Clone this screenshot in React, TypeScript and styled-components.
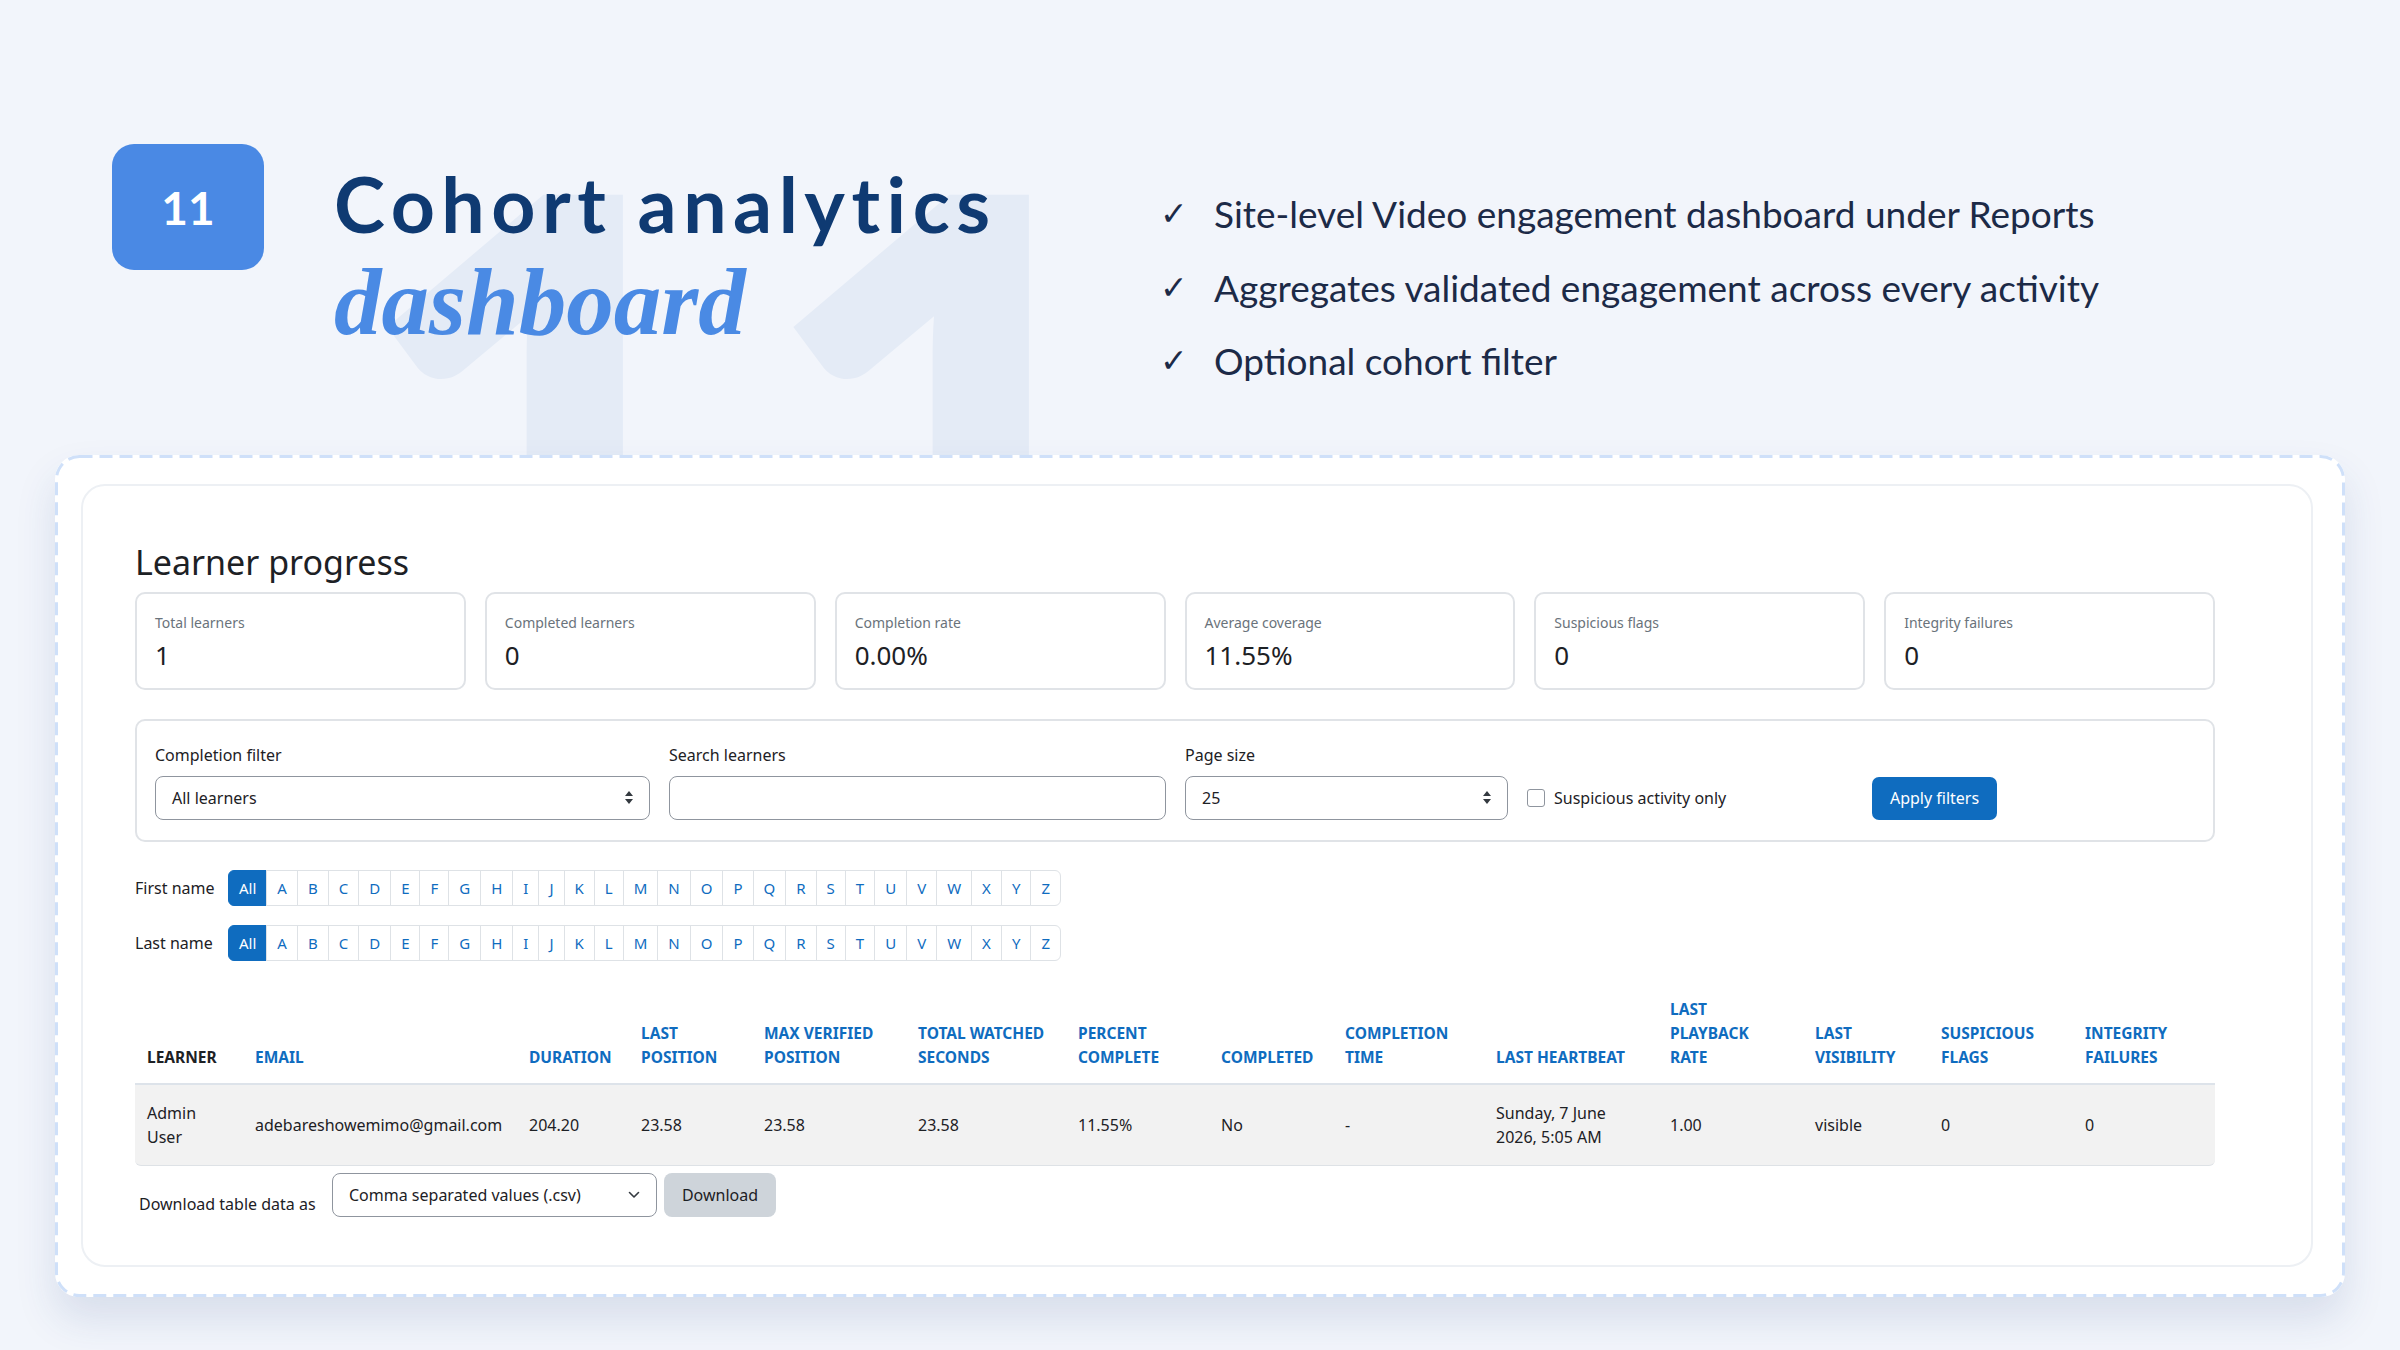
import React from "react";
import styled, { createGlobalStyle, css } from "styled-components";

const GlobalStyle = createGlobalStyle`
  html, body { margin: 0; padding: 0; background: #f2f5fb; }
  * { box-sizing: border-box; }
  body { font-family: "Noto Sans", "Open Sans", sans-serif; color: #1d2125; }
`;

const Page = styled.div`
  position: relative;
  width: 2400px;
  height: 1350px;
  overflow: hidden;
  background: #f2f5fb;
`;

const Watermark = styled.div`
  position: absolute;
  left: 346px;
  top: 82px;
  font-family: Lato, sans-serif;
  font-weight: 900;
  font-size: 700px;
  line-height: 1;
  color: #e4ebf6;
  pointer-events: none;
  user-select: none;
  z-index: 0;
`;

const Hero = styled.header`
  position: relative;
  z-index: 1;
  display: flex;
  align-items: flex-start;
  height: 455px;
  padding: 144px 0 0 112px;
`;

const Badge = styled.div`
  flex: none;
  width: 152px;
  height: 126px;
  border-radius: 22px;
  background: #4a89e4;
  color: #fff;
  display: flex;
  align-items: center;
  justify-content: center;
  font-family: Lato, sans-serif;
  font-weight: 700;
  font-size: 46px;
`;

const TitleBlock = styled.div`
  flex: none;
  width: 826px;
  margin: 21px 0 0 70px;
`;

const TitleMain = styled.h1`
  margin: 0;
  font-family: Lato, sans-serif;
  font-weight: 700;
  font-size: 77px;
  line-height: 1;
  letter-spacing: 6.5px;
  color: #0f3a72;
  white-space: nowrap;
`;

const TitleAccent = styled.div`
  margin-top: 13px;
  font-family: "Liberation Serif", serif;
  font-style: italic;
  font-weight: 700;
  font-size: 95px;
  line-height: 1;
  color: #4a8ae4;
`;

const Bullets = styled.ul`
  list-style: none;
  margin: 33px 0 0;
  padding: 0;
`;

const Bullet = styled.li`
  display: flex;
  align-items: center;
  height: 73.5px;
  font-family: Lato, sans-serif;
  font-size: 37px;
  color: #1c2a47;
  white-space: nowrap;
`;

const Check = styled.span`
  width: 54px;
  flex: none;
  font-family: "DejaVu Sans", sans-serif;
  font-size: 33px;
  color: #1c2a47;
`;

const Frame = styled.section`
  position: relative;
  z-index: 1;
  display: flex;
  margin-left: 55px;
  width: 2290px;
  height: 842px;
  border: 3px solid transparent;
  border-radius: 24px;
  background: #fff;
  box-shadow: 0 22px 40px rgba(38, 72, 130, 0.13);
  padding: 26px 29px 27px 23px;
`;

const DashedOutline = styled.svg`
  position: absolute;
  top: -3px;
  left: -3px;
  width: 2290px;
  height: 842px;
  pointer-events: none;
  overflow: visible;
`;

const Panel = styled.div`
  flex: 1;
  border: 2px solid #edf0f4;
  border-radius: 24px;
  padding: 56px 96px 0 52px;
`;

const Heading = styled.h2`
  margin: 0 0 9px;
  font-size: 34px;
  font-weight: 400;
  line-height: 40.8px;
  color: #1d2125;
`;

const Stats = styled.div`
  display: grid;
  grid-template-columns: repeat(6, 1fr);
  gap: 19px;
`;

const StatCard = styled.div`
  height: 98px;
  border: 2px solid #e0e3e7;
  border-radius: 10px;
  padding: 19px 18px 0;
`;

const StatLabel = styled.div`
  font-size: 14px;
  line-height: 20px;
  color: #6a737b;
`;

const StatValue = styled.div`
  margin-top: 6px;
  font-size: 26px;
  line-height: 32px;
  color: #1d2125;
`;

const FilterBox = styled.form`
  margin-top: 29px;
  height: 123px;
  border: 2px solid #e0e3e7;
  border-radius: 10px;
  padding: 23px 18px 20px;
  display: flex;
  align-items: flex-end;
  gap: 19px;
`;

const Field = styled.div<{ $w: number }>`
  width: ${(p) => p.$w}px;
  flex: none;
  display: flex;
  flex-direction: column;
`;

const FieldLabel = styled.label`
  font-size: 16px;
  line-height: 22px;
  margin-bottom: 10px;
  color: #1d2125;
`;

const controlBase = css`
  height: 44px;
  border: 1px solid #8f959e;
  border-radius: 8px;
  background: #fff;
  font-family: inherit;
  font-size: 16px;
  color: #1d2125;
`;

const SelectBox = styled.div`
  ${controlBase};
  display: flex;
  align-items: center;
  justify-content: space-between;
  padding: 0 16px;
`;

const TextInput = styled.input`
  ${controlBase};
  width: 100%;
  padding: 0 16px;
  outline: none;
`;

const CheckGroup = styled.label`
  flex: none;
  width: 326px;
  height: 44px;
  display: flex;
  align-items: center;
  gap: 9px;
  font-size: 16px;
  color: #1d2125;
`;

const CheckBox = styled.span`
  width: 18px;
  height: 18px;
  border: 1px solid #8f959e;
  border-radius: 3px;
  background: #fff;
`;

const PrimaryButton = styled.button`
  flex: none;
  width: 125px;
  height: 43px;
  border: none;
  border-radius: 7px;
  background: #0f6cbf;
  color: #fff;
  font-family: inherit;
  font-size: 16px;
`;

const InitialsRow = styled.div<{ $first?: boolean }>`
  display: flex;
  align-items: center;
  margin-top: ${(p) => (p.$first ? 28 : 19)}px;
`;

const InitialsLabel = styled.span`
  width: 93px;
  flex: none;
  font-size: 16px;
  color: #1d2125;
`;

const Letters = styled.div`
  display: flex;
`;

const Letter = styled.span<{ $active?: boolean }>`
  height: 36px;
  padding: 0 10px;
  line-height: 34px;
  font-size: 15px;
  border: 1px solid #dee2e6;
  margin-left: -1px;
  color: #0f6cbf;
  background: #fff;
  &:first-child { margin-left: 0; border-radius: 6px 0 0 6px; }
  &:last-child { border-radius: 0 6px 6px 0; }
  ${(p) =>
    p.$active &&
    css`
      background: #0f6cbf;
      border-color: #0f6cbf;
      color: #fff;
    `}
`;

const Table = styled.table`
  margin-top: 28px;
  width: 2080px;
  table-layout: fixed;
  border-collapse: separate;
  border-spacing: 0;
`;

const Col = styled.col<{ $w: number }>`
  width: ${(p) => p.$w}px;
`;

const Th = styled.th<{ $plain?: boolean }>`
  vertical-align: bottom;
  text-align: left;
  padding: 8px 12px 14px;
  font-size: 15.5px;
  font-weight: 700;
  line-height: 24px;
  text-transform: uppercase;
  white-space: nowrap;
  color: ${(p) => (p.$plain ? "#1d2125" : "#0f6cbf")};
  border-bottom: 2px solid #dde3ea;
`;

const Td = styled.td`
  padding: 16px 12px;
  font-size: 16px;
  line-height: 24px;
  background: #f2f2f2;
  border-bottom: 1px solid #dee2e6;
  vertical-align: middle;
  &:first-child { border-bottom-left-radius: 6px; }
  &:last-child { border-bottom-right-radius: 6px; }
`;

const DownloadRow = styled.div`
  display: flex;
  align-items: flex-end;
  margin-top: 7px;
`;

const DownloadLabel = styled.span`
  width: 193px;
  flex: none;
  margin: 0 0 2px 4px;
  font-size: 16px;
  line-height: 22px;
  white-space: nowrap;
  color: #1d2125;
`;

const DownloadSelect = styled(SelectBox)`
  width: 325px;
`;

const SecondaryButton = styled.button`
  margin-left: 7px;
  width: 112px;
  height: 44px;
  border: none;
  border-radius: 8px;
  background: #ced4da;
  color: #1d2125;
  font-family: inherit;
  font-size: 16px;
`;

const SortIcon = () => (
  <svg width="8" height="13" viewBox="0 0 8 13" aria-hidden>
    <path d="M4 0 L8 5 H0 Z M4 13 L0 8 H8 Z" fill="#343a40" />
  </svg>
);

const ChevronIcon = () => (
  <svg width="12" height="8" viewBox="0 0 12 8" aria-hidden>
    <polyline
      points="1.5,1.5 6,6 10.5,1.5"
      fill="none"
      stroke="#343a40"
      strokeWidth="1.6"
      strokeLinecap="round"
      strokeLinejoin="round"
    />
  </svg>
);

const stats = [
  ["Total learners", "1"],
  ["Completed learners", "0"],
  ["Completion rate", "0.00%"],
  ["Average coverage", "11.55%"],
  ["Suspicious flags", "0"],
  ["Integrity failures", "0"],
];

const letters = "ABCDEFGHIJKLMNOPQRSTUVWXYZ".split("");

const columns: { w: number; lines: string[] }[] = [
  { w: 108, lines: ["Learner"] },
  { w: 274, lines: ["Email"] },
  { w: 112, lines: ["Duration"] },
  { w: 123, lines: ["Last", "position"] },
  { w: 154, lines: ["Max verified", "position"] },
  { w: 160, lines: ["Total watched", "seconds"] },
  { w: 143, lines: ["Percent", "complete"] },
  { w: 124, lines: ["Completed"] },
  { w: 151, lines: ["Completion", "time"] },
  { w: 174, lines: ["Last heartbeat"] },
  { w: 145, lines: ["Last", "playback", "rate"] },
  { w: 126, lines: ["Last", "visibility"] },
  { w: 144, lines: ["Suspicious", "flags"] },
  { w: 142, lines: ["Integrity", "failures"] },
];

const row = [
  "Admin User",
  "adebareshowemimo@gmail.com",
  "204.20",
  "23.58",
  "23.58",
  "23.58",
  "11.55%",
  "No",
  "-",
  "Sunday, 7 June 2026, 5:05 AM",
  "1.00",
  "visible",
  "0",
  "0",
];

const InitialsBar = ({ label, first }: { label: string; first?: boolean }) => (
  <InitialsRow $first={first}>
    <InitialsLabel>{label}</InitialsLabel>
    <Letters>
      <Letter $active>All</Letter>
      {letters.map((l) => (
        <Letter key={l}>{l}</Letter>
      ))}
    </Letters>
  </InitialsRow>
);

export default function App() {
  return (
    <Page>
      <GlobalStyle />
      <Watermark aria-hidden>11</Watermark>
      <Hero>
        <Badge>11</Badge>
        <TitleBlock>
          <TitleMain>Cohort analytics</TitleMain>
          <TitleAccent>dashboard</TitleAccent>
        </TitleBlock>
        <Bullets>
          <Bullet>
            <Check>✓</Check>Site-level Video engagement dashboard under Reports
          </Bullet>
          <Bullet>
            <Check>✓</Check>Aggregates validated engagement across every activity
          </Bullet>
          <Bullet>
            <Check>✓</Check>Optional cohort filter
          </Bullet>
        </Bullets>
      </Hero>

      <Frame>
        <DashedOutline viewBox="0 0 2290 842" aria-hidden>
          <rect
            x="1.5"
            y="1.5"
            width="2287"
            height="839"
            rx="23"
            fill="none"
            stroke="#cfe0f9"
            strokeWidth="3"
            strokeDasharray="13 7"
          />
        </DashedOutline>
        <Panel>
          <Heading>Learner progress</Heading>
          <Stats>
            {stats.map(([label, value]) => (
              <StatCard key={label}>
                <StatLabel>{label}</StatLabel>
                <StatValue>{value}</StatValue>
              </StatCard>
            ))}
          </Stats>

          <FilterBox onSubmit={(e) => e.preventDefault()}>
            <Field $w={495}>
              <FieldLabel>Completion filter</FieldLabel>
              <SelectBox>
                <span>All learners</span>
                <SortIcon />
              </SelectBox>
            </Field>
            <Field $w={497}>
              <FieldLabel>Search learners</FieldLabel>
              <TextInput type="text" />
            </Field>
            <Field $w={323}>
              <FieldLabel>Page size</FieldLabel>
              <SelectBox>
                <span>25</span>
                <SortIcon />
              </SelectBox>
            </Field>
            <CheckGroup>
              <CheckBox />
              Suspicious activity only
            </CheckGroup>
            <PrimaryButton type="submit">Apply filters</PrimaryButton>
          </FilterBox>

          <InitialsBar label="First name" first />
          <InitialsBar label="Last name" />

          <Table>
            <colgroup>
              {columns.map((c, i) => (
                <Col key={i} $w={c.w} />
              ))}
            </colgroup>
            <thead>
              <tr>
                {columns.map((c, i) => (
                  <Th key={i} $plain={i === 0}>
                    {c.lines.map((l, j) => (
                      <React.Fragment key={j}>
                        {j > 0 && <br />}
                        {l}
                      </React.Fragment>
                    ))}
                  </Th>
                ))}
              </tr>
            </thead>
            <tbody>
              <tr>
                {row.map((v, i) => (
                  <Td key={i}>{v}</Td>
                ))}
              </tr>
            </tbody>
          </Table>

          <DownloadRow>
            <DownloadLabel>Download table data as</DownloadLabel>
            <DownloadSelect>
              <span>Comma separated values (.csv)</span>
              <ChevronIcon />
            </DownloadSelect>
            <SecondaryButton type="button">Download</SecondaryButton>
          </DownloadRow>
        </Panel>
      </Frame>
    </Page>
  );
}
